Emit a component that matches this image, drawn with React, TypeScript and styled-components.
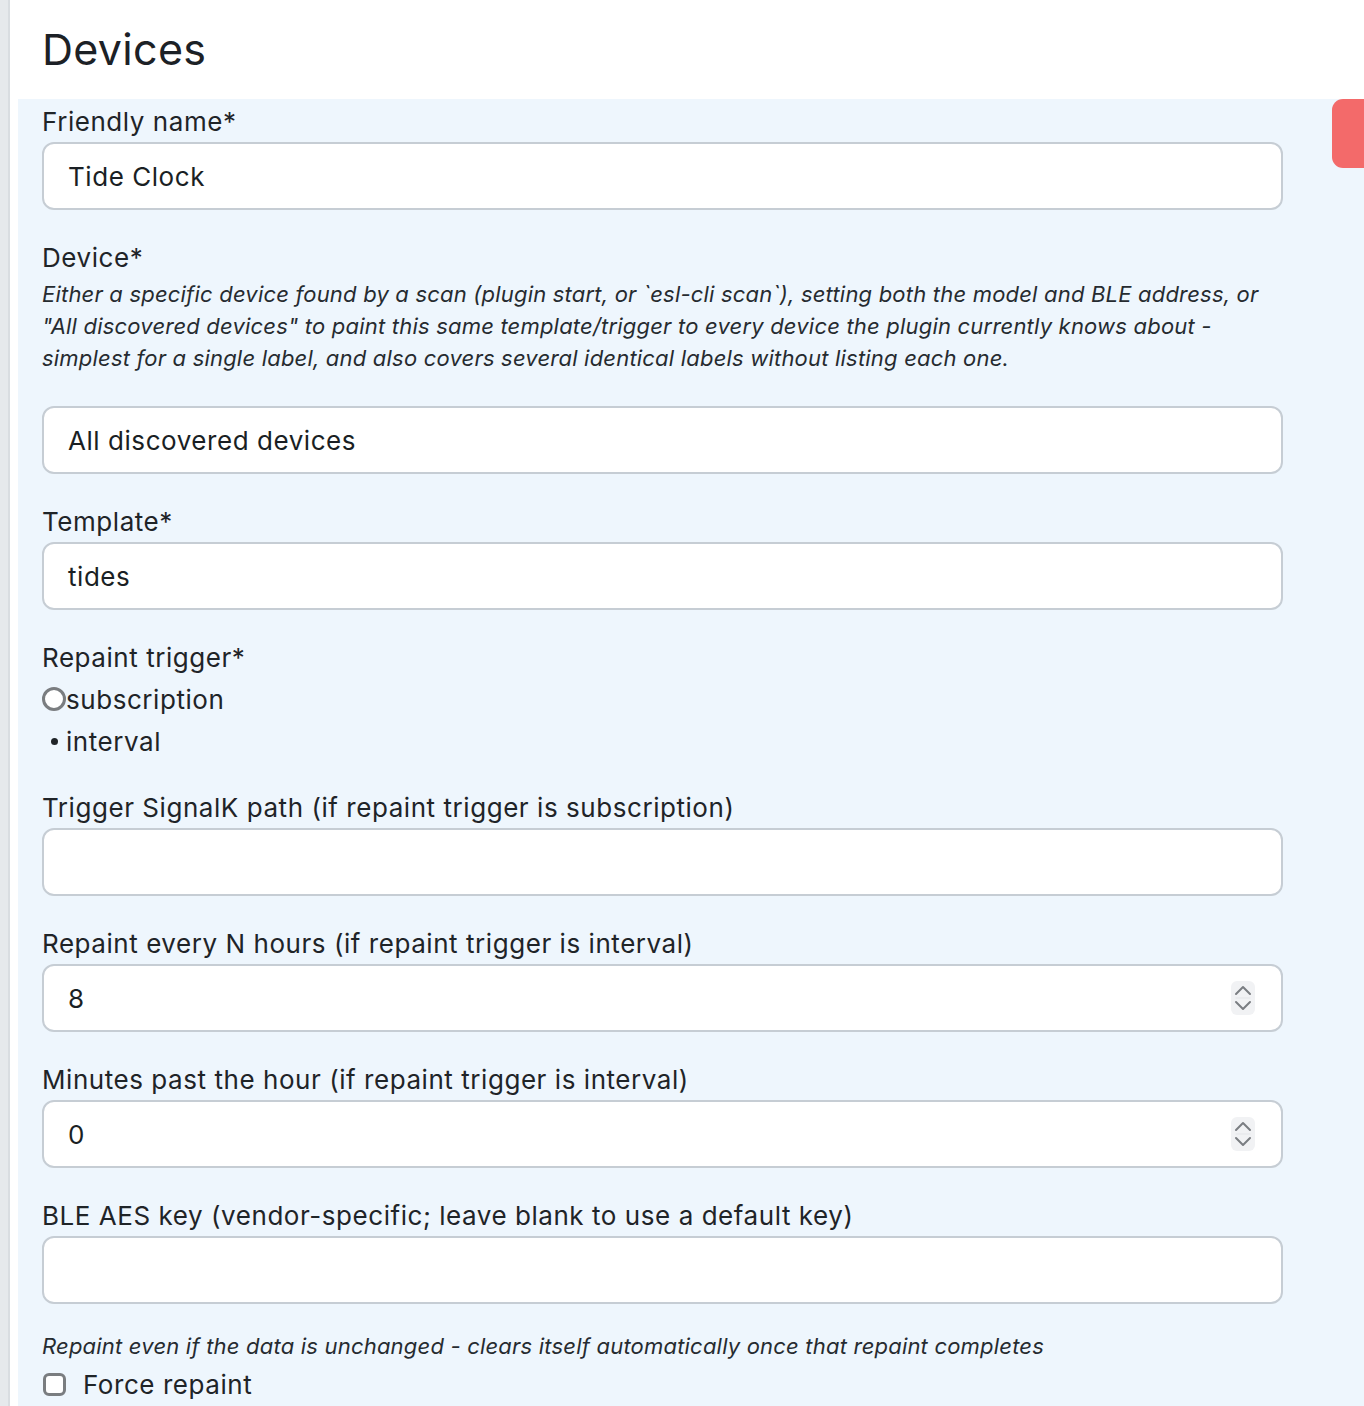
import React from 'react';
import styled, { createGlobalStyle } from 'styled-components';

const GlobalStyle = createGlobalStyle`
  html, body {
    margin: 0;
    padding: 0;
    background: #ffffff;
    font-family: Inter, "Noto Sans", "Liberation Sans", sans-serif;
    color: #1f2428;
  }
`;

const Page = styled.div`
  display: flex;
  min-height: 1406px;
`;

const Sidebar = styled.div`
  width: 8px;
  flex: none;
  background: #e6e9ec;
  border-right: 2px solid #d9dde1;
`;

const Main = styled.div`
  flex: 1;
  padding-left: 8px;
  overflow: hidden;
`;

const Title = styled.h1`
  margin: 0;
  height: 99px;
  padding: 19px 0 0 24px;
  box-sizing: border-box;
  font-size: 43px;
  font-weight: 400;
  line-height: 60px;
  letter-spacing: 0.3px;
  color: #1c2126;
`;

const Panel = styled.div`
  position: relative;
  background: #eef6fd;
  padding: 3px 81px 0 24px;
  min-height: 1320px;
`;

const Tab = styled.div`
  position: absolute;
  top: 0;
  right: 0;
  width: 32px;
  height: 69px;
  background: #f36a6a;
  border-radius: 11px 0 0 11px;
`;

const Field = styled.div<{ $gap?: number }>`
  margin-bottom: ${(p) => p.$gap ?? 28}px;
`;

const Label = styled.div`
  font-size: 26px;
  line-height: 40px;
  letter-spacing: 0.55px;
  color: #1f2428;
`;

const Help = styled.div<{ $after?: number }>`
  font-size: 22px;
  font-style: italic;
  line-height: 32px;
  color: #262b30;
  letter-spacing: 0.2px;
  margin-bottom: ${(p) => p.$after ?? 0}px;
`;

const InputBox = styled.div`
  position: relative;
  height: 68px;
  box-sizing: border-box;
  border: 2px solid #c6cdd4;
  border-radius: 12px;
  background: #ffffff;
  display: flex;
  align-items: center;
  padding: 0 24px;
  font-size: 26px;
  letter-spacing: 0.55px;
  color: #1a1f24;
`;

const Spinner = styled.div`
  position: absolute;
  right: 26px;
  top: 50%;
  transform: translateY(-50%);
  width: 24px;
  height: 34px;
  border-radius: 6px;
  background: #f1f2f4;
  display: flex;
  align-items: center;
  justify-content: center;
`;

const OptionRow = styled.div`
  display: flex;
  align-items: center;
  height: 42px;
  font-size: 26px;
  letter-spacing: 0.55px;
  color: #1f2428;
`;

const RadioSlot = styled.span`
  width: 24px;
  height: 24px;
  display: flex;
  align-items: center;
  justify-content: center;
  flex: none;
`;

const RadioCircle = styled.span`
  width: 24px;
  height: 24px;
  box-sizing: border-box;
  border: 3px solid #7a7d80;
  border-radius: 50%;
  background: #ffffff;
`;

const RadioDot = styled.span`
  width: 7px;
  height: 7px;
  border-radius: 50%;
  background: #1f2428;
`;

const CheckRow = styled.label`
  display: flex;
  align-items: center;
  gap: 17px;
  height: 44px;
  font-size: 26px;
  letter-spacing: 0.55px;
  color: #1f2428;
  padding-left: 1px;
`;

const CheckBox = styled.span`
  width: 23px;
  height: 23px;
  box-sizing: border-box;
  border: 3px solid #7a7d80;
  border-radius: 6px;
  background: #ffffff;
`;

const SpinIcon = () => (
  <Spinner>
    <svg width="20" height="30" viewBox="0 0 20 30" fill="none" stroke="#7b7e82" strokeWidth="2" strokeLinecap="round" strokeLinejoin="round">
      <path d="M3 11 L10 4 L17 11" />
      <path d="M3 19 L10 26 L17 19" />
      <path d="M3 15 H17" stroke="#e3e5e8" strokeWidth="1" />
    </svg>
  </Spinner>
);

interface TextFieldProps {
  label: string;
  value?: string;
  number?: boolean;
  gap?: number;
}

const TextField: React.FC<TextFieldProps> = ({ label, value = '', number, gap }) => (
  <Field $gap={gap}>
    <Label>{label}</Label>
    <InputBox>
      {value}
      {number && <SpinIcon />}
    </InputBox>
  </Field>
);

export default function App() {
  return (
    <>
      <GlobalStyle />
      <Page>
        <Sidebar />
        <Main>
          <Title>Devices</Title>
          <Panel>
            <Tab />
            <TextField label="Friendly name*" value="Tide Clock" />
            <Field>
              <Label>Device*</Label>
              <Help $after={32}>
                Either a specific device found by a scan (plugin start, or `esl-cli scan`), setting both the model
                and BLE address, or "All discovered devices" to paint this same template/trigger to every device the
                plugin currently knows about - simplest for a single label, and also covers several identical labels
                without listing each one.
              </Help>
              <InputBox>All discovered devices</InputBox>
            </Field>
            <TextField label="Template*" value="tides" />
            <Field $gap={26}>
              <Label>Repaint trigger*</Label>
              <OptionRow>
                <RadioSlot>
                  <RadioCircle />
                </RadioSlot>
                subscription
              </OptionRow>
              <OptionRow>
                <RadioSlot>
                  <RadioDot />
                </RadioSlot>
                interval
              </OptionRow>
            </Field>
            <TextField label="Trigger SignalK path (if repaint trigger is subscription)" />
            <TextField label="Repaint every N hours (if repaint trigger is interval)" value="8" number />
            <TextField label="Minutes past the hour (if repaint trigger is interval)" value="0" number />
            <TextField label="BLE AES key (vendor-specific; leave blank to use a default key)" gap={26} />
            <Help>Repaint even if the data is unchanged - clears itself automatically once that repaint completes</Help>
            <CheckRow>
              <CheckBox />
              Force repaint
            </CheckRow>
          </Panel>
        </Main>
      </Page>
    </>
  );
}
